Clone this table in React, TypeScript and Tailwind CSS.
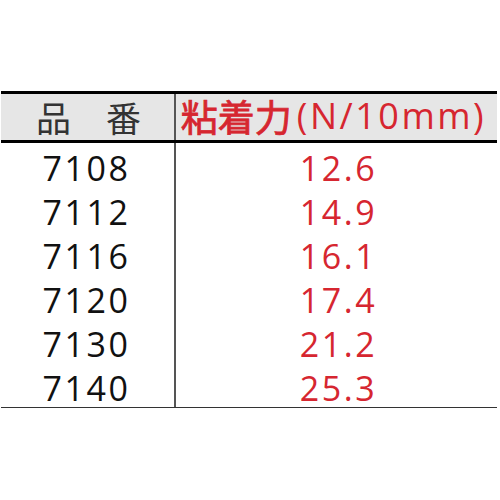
import React from "react";

const rows = [
  ["7108", "12.6"],
  ["7112", "14.9"],
  ["7116", "16.1"],
  ["7120", "17.4"],
  ["7130", "21.2"],
  ["7140", "25.3"],
];

export default function App() {
  return (
    <div className="w-[500px] h-[500px] bg-white pt-[91px]">
      <div className="ml-[1px] w-[496px]">
        <div className="flex h-[52px] border-t-[3px] border-b-[3px] border-black bg-[#e6e6e6]">
          <div className="w-[173px] flex items-center justify-center text-[35px] leading-none text-[#333] pb-[2px] pl-[2px]" style={{ fontFamily: '"Noto Sans CJK JP", sans-serif' }}>
            品　番
          </div>
          <div className="w-[2px] bg-[#555]" />
          <div className="flex-1 flex items-center justify-center leading-none text-[#d62630] pb-[2px] pr-[6px]">
            <span className="text-[37px] font-normal [-webkit-text-stroke:0.8px_#d62630]" style={{ fontFamily: '"Noto Sans CJK JP", sans-serif' }}>粘着力</span>
            <span className="text-[36px] ml-[5px] tracking-[2.5px]" style={{ fontFamily: '"Open Sans", sans-serif' }}>(N/10mm)</span>
          </div>
        </div>
        <div className="border-b border-[#333]">
          {rows.map(([a, b]) => (
            <div key={a} className="flex h-[44px]">
              <div className="w-[173px] flex items-center justify-center text-[34px] leading-none text-[#111] tracking-[2.5px] pt-[6px] pr-[2px]" style={{ fontFamily: '"Open Sans", sans-serif' }}>
                {a}
              </div>
              <div className="w-[2px] bg-[#555]" />
              <div className="flex-1 flex items-center justify-center text-[34px] leading-none text-[#d62630] tracking-[2.5px] pt-[6px] pl-[4px]" style={{ fontFamily: '"Open Sans", sans-serif' }}>
                {b}
              </div>
            </div>
          ))}
        </div>
      </div>
    </div>
  );
}
